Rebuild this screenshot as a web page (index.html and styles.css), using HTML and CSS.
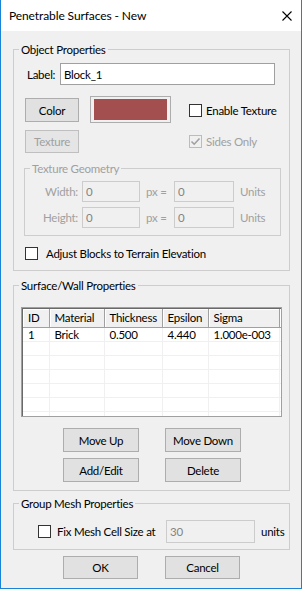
FILE: index.html
```
<!doctype html>
<html>
<head>
<meta charset="UTF-8">
<title>Penetrable Surfaces - New</title>
<link rel="stylesheet" href="styles.css">
</head>
<body>
<div class="window">
    <div class="titlebar">
        <span class="title">Penetrable Surfaces - New</span>
        <svg class="close" width="10" height="10" viewBox="0 0 10 10">
            <path d="M0.5 0.5 L9.5 9.5 M9.5 0.5 L0.5 9.5" stroke="#000" stroke-width="1.1" fill="none"/>
        </svg>
    </div>

    <div class="client">
        <fieldset class="group group-object">
            <legend>Object Properties</legend>

            <div class="label-row">
                <span>Label:</span>
                <div class="edit edit-label">Block_1</div>
            </div>

            <div class="color-grid">
                <div class="btn">Color</div>
                <div class="swatch"><div class="swatch-fill"></div></div>
                <label class="checkrow checkrow-tight">
                    <span class="check"></span>
                    <span>Enable Texture</span>
                </label>

                <div class="btn btn-disabled">Texture</div>
                <div></div>
                <label class="checkrow checkrow-tight disabled">
                    <span class="check check-disabled">
                        <svg width="11" height="11" viewBox="0 0 11 11">
                            <path d="M1.5 5.5 L4.2 8.2 L9.5 2.5" stroke="#a0a0a0" stroke-width="1.6" fill="none"/>
                        </svg>
                    </span>
                    <span>Sides Only</span>
                </label>
            </div>

            <fieldset class="group group-texture disabled">
                <legend>Texture Geometry</legend>
                <div class="geom-grid">
                    <span class="geom-label">Width:</span>
                    <div class="edit edit-disabled">0</div>
                    <span class="geom-eq">px =</span>
                    <div class="edit edit-disabled">0</div>
                    <span class="geom-unit">Units</span>

                    <span class="geom-label">Height:</span>
                    <div class="edit edit-disabled">0</div>
                    <span class="geom-eq">px =</span>
                    <div class="edit edit-disabled">0</div>
                    <span class="geom-unit">Units</span>
                </div>
            </fieldset>

            <label class="checkrow checkrow-adjust">
                <span class="check"></span>
                <span>Adjust Blocks to Terrain Elevation</span>
            </label>
        </fieldset>

        <fieldset class="group group-surface">
            <legend>Surface/Wall Properties</legend>

            <div class="listview">
                <table>
                    <colgroup>
                        <col style="width:26px">
                        <col style="width:55px">
                        <col style="width:58px">
                        <col style="width:46px">
                        <col style="width:71px">
                        <col>
                    </colgroup>
                    <thead>
                        <tr><th>ID</th><th>Material</th><th>Thickness</th><th>Epsilon</th><th>Sigma</th><th class="filler"></th></tr>
                    </thead>
                    <tbody>
                        <tr><td>1</td><td>Brick</td><td>0.500</td><td>4.440</td><td>1.000e-003</td><td class="filler"></td></tr>
                        <tr><td></td><td></td><td></td><td></td><td></td><td class="filler"></td></tr>
                        <tr><td></td><td></td><td></td><td></td><td></td><td class="filler"></td></tr>
                        <tr><td></td><td></td><td></td><td></td><td></td><td class="filler"></td></tr>
                        <tr><td></td><td></td><td></td><td></td><td></td><td class="filler"></td></tr>
                        <tr><td></td><td></td><td></td><td></td><td></td><td class="filler"></td></tr>
                        <tr><td></td><td></td><td></td><td></td><td></td><td class="filler"></td></tr>
                    </tbody>
                </table>
            </div>

            <div class="btn-row btn-row-first">
                <div class="btn btn-list">Move Up</div>
                <div class="btn btn-list">Move Down</div>
            </div>
            <div class="btn-row">
                <div class="btn btn-list">Add/Edit</div>
                <div class="btn btn-list">Delete</div>
            </div>
        </fieldset>

        <fieldset class="group group-mesh">
            <legend>Group Mesh Properties</legend>
            <div class="mesh-row">
                <span class="check"></span>
                <span class="mesh-text">Fix Mesh Cell Size at</span>
                <div class="edit edit-disabled edit-mesh">30</div>
                <span class="mesh-unit">units</span>
            </div>
        </fieldset>

        <div class="dialog-buttons">
            <div class="btn btn-dialog">OK</div>
            <div class="btn btn-dialog">Cancel</div>
        </div>
    </div>
</div>
</body>
</html>
```

FILE: styles.css
```
* {
    box-sizing: border-box;
}

body {
    margin: 0;
    font-family: "Segoe UI", Lato, sans-serif;
    font-size: 11.5px;
    letter-spacing: -0.25px;
    color: #000;
}

.window {
    height: 589px;
    border: 1px solid #1883d7;
    border-top: none;
    background-color: #f0f0f0;
    display: flex;
    flex-direction: column;
}

.titlebar {
    height: 31px;
    background-color: #fff;
    display: flex;
    align-items: center;
    padding-left: 8px;
    font-size: 12px;
    letter-spacing: -0.1px;
}

.title {
    flex: 1;
}

.close {
    margin-right: 9px;
}

.client {
    padding: 10px 11px 0 12px;
}

/* group boxes */
.group {
    margin: 0;
    padding: 0;
    min-width: 0;
    border: 1px solid #cdcdcd;
}

.group legend {
    margin-left: 5px;
    padding: 0 2px;
    line-height: 17px;
    height: 17px;
}

.disabled {
    color: #a0a0a0;
}

/* edits */
.edit {
    border: 1px solid #a0a0a0;
    background-color: #fff;
    padding: 0 3px;
    display: flex;
    align-items: center;
}

.edit-disabled {
    border-color: #cccccc;
    background-color: #f0f0f0;
    color: #838383;
}

/* buttons */
.btn {
    height: 24px;
    border: 1px solid #adadad;
    background-color: #e1e1e1;
    display: flex;
    align-items: center;
    justify-content: center;
}

.btn-disabled {
    height: 23px;
    border-color: #bfbfbf;
    background-color: #e5e5e5;
    color: #a0a0a0;
}

/* checkboxes */
.checkrow {
    display: flex;
    align-items: center;
    white-space: nowrap;
}

.check {
    width: 13px;
    height: 13px;
    flex: none;
    border: 1px solid #333;
    background-color: #fff;
    display: flex;
    align-items: center;
    justify-content: center;
}

.check-disabled {
    border-color: #bcbcbc;
    background-color: #f0f0f0;
}

.checkrow-tight .check {
    margin-right: 4px;
}

/* object properties */
.label-row {
    margin-top: 5px;
    padding: 0 14px 0 13px;
    height: 22px;
    display: flex;
    align-items: center;
}

.edit-label {
    margin-left: auto;
    width: 215px;
    height: 22px;
}

.color-grid {
    margin-top: 13px;
    padding-left: 11px;
    display: grid;
    grid-template-columns: 54px 81px 1fr;
    grid-template-rows: 24px 23px;
    column-gap: 11px;
    row-gap: 8px;
}

.color-grid .checkrow {
    padding-left: 7px;
}

.swatch {
    margin-top: -2px;
    height: 27px;
    border: 1px solid #adadad;
    background-color: #f0f0f0;
    padding: 2px 3px;
}

.swatch-fill {
    height: 100%;
    background-color: #a34f4f;
}

.group-texture {
    margin: 7px 8px 0 10px;
    padding-bottom: 7px;
}

.geom-grid {
    margin-top: 4px;
    display: grid;
    grid-template-columns: 57px 58px 34px 60px 1fr;
    grid-template-rows: 21px 21px;
    row-gap: 5px;
    align-items: center;
}

.geom-grid .edit {
    height: 21px;
}

.geom-label {
    text-align: right;
    padding-right: 4px;
}

.geom-eq, .geom-unit {
    padding-left: 6px;
}

.checkrow-adjust {
    margin: 11px 0 10px 11px;
    height: 13px;
}

.checkrow-adjust .check {
    margin-right: 8px;
}

/* surface / wall list */
.group-surface {
    margin-top: 6px;
    padding-bottom: 8px;
}

.listview {
    margin: 13px 7px 0;
    height: 110px;
    border: 1px solid #a0a0a0;
    box-shadow: inset 1px 1px 0 #696969;
    background-color: #fff;
    overflow: hidden;
    padding: 1px 0 0 1px;
}

.listview table {
    width: 100%;
    table-layout: fixed;
    border-collapse: collapse;
}

.listview th {
    height: 18px;
    padding: 0 0 0 5px;
    font-weight: normal;
    text-align: left;
    background-color: #f0f0f0;
    border-right: 1px solid #a0a0a0;
    border-bottom: 1px solid #a0a0a0;
    box-shadow: inset 1px 1px 0 #fff;
    white-space: nowrap;
    overflow: hidden;
}

.listview th.filler {
    border-right: none;
}

.listview td {
    height: 14px;
    padding: 0 0 0 5px;
    border-right: 1px solid #f0f0f0;
    border-bottom: 1px solid #f0f0f0;
    white-space: nowrap;
    line-height: 13px;
}

.listview td.filler {
    border-right: none;
}

.btn-row {
    margin-top: 6px;
    padding-left: 49px;
    display: flex;
    gap: 26px;
}

.btn-row-first {
    margin-top: 11px;
}

.btn-list {
    width: 76px;
}

/* group mesh */
.group-mesh {
    margin-top: 4px;
    padding-bottom: 6px;
}

.mesh-row {
    margin-top: 8px;
    padding-left: 24px;
    height: 23px;
    display: flex;
    align-items: center;
}

.mesh-text {
    margin-left: 6px;
    width: 109px;
    white-space: nowrap;
}

.edit-mesh {
    width: 89px;
    height: 23px;
}

.mesh-unit {
    margin-left: 6px;
}

.dialog-buttons {
    margin-top: 6px;
    padding-left: 50px;
    display: flex;
    gap: 27px;
}

.btn-dialog {
    width: 75px;
    height: 23px;
}
```
